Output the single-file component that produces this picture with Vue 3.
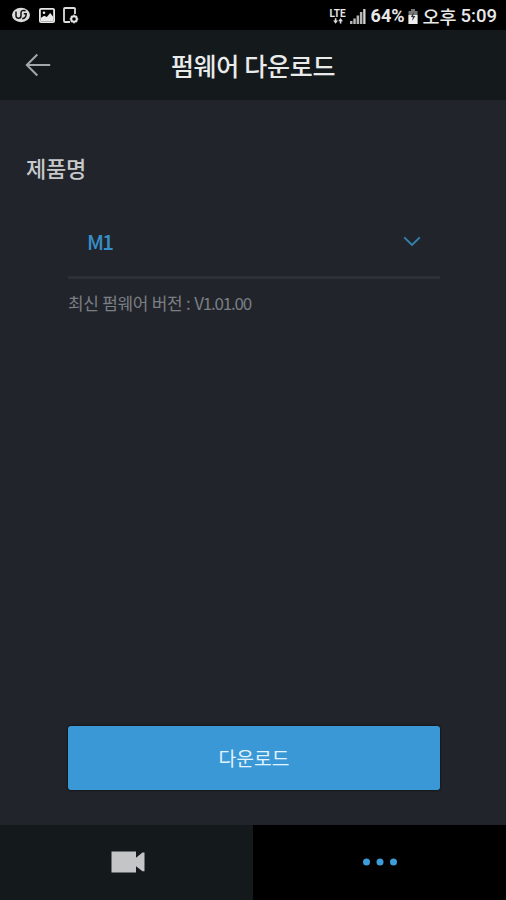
<template>
    <div class="screen">
        <div class="status-bar">
            <div class="status-left">
                <svg width="20" height="16" viewBox="0 0 20 16">
                    <ellipse cx="10" cy="8" rx="9" ry="7.2" fill="#dcdcdc" />
                    <path d="M5 4.5v4.2c0 3.4 5 3.2 5 0V5.5c0-2 2-2.4 4.6-1.8M12.8 6.8h2.4c0 3-1.3 4.6-4 5" fill="none" stroke="#111" stroke-width="1.5" />
                </svg>
                <svg class="icon-image" width="16" height="15" viewBox="0 0 16 15">
                    <rect x="0.9" y="0.9" width="14.2" height="13.2" rx="1.2" fill="none" stroke="#e8e8e8" stroke-width="1.8" />
                    <path d="M2 13V9.8l3.2-2 2.6 1.2 3.4-4L14 8.5V13z" fill="#e8e8e8" />
                    <circle cx="5" cy="4.7" r="1.3" fill="#e8e8e8" />
                </svg>
                <svg class="icon-device" width="16" height="17" viewBox="0 0 16 17">
                    <path d="M12 7V1.9Q12 1 11 1H2Q1 1 1 2v12q0 1 1 1h5" fill="none" stroke="#dedede" stroke-width="1.8" />
                    <circle cx="11" cy="12" r="2.8" fill="none" stroke="#e4e4e4" stroke-width="2" />
                    <path d="M11 7.6v2M11 14.4v2M6.6 12h2M13.4 12h2M7.9 8.9l1.3 1.3M14.1 8.9l-1.3 1.3M7.9 15.1l1.3-1.3M14.1 15.1l-1.3-1.3" stroke="#e4e4e4" stroke-width="1.2" />
                </svg>
            </div>
            <div class="status-right">
                <div class="network">
                    <span class="lte">LTE</span>
                    <svg width="10" height="6" viewBox="0 0 10 6">
                        <path d="M0.2 2.6h1.6V0.2h1.6v2.4H5L2.6 5.8zM5.2 3.2L7.6 0 10 3.2H8.4v2.4H6.8V3.2z" fill="#ddd" />
                    </svg>
                </div>
                <svg class="signal" width="16" height="16" viewBox="0 0 16 16">
                    <path d="M0 13h2.5v3H0zM3.3 10.4h2.5V16H3.3zM6.6 7.4h2.5V16H6.6zM9.9 4h2.5v12H9.9z" fill="#b5b5b5" />
                    <path d="M13.2 1h2.3v15h-2.3z" fill="#d2d2d2" />
                </svg>
                <span class="percent">{{ battery }}%</span>
                <svg class="battery" width="10" height="15" viewBox="0 0 10 15">
                    <path d="M3 0h4v2h2.5v13h-9V2H3z" fill="#777" />
                    <path d="M0.5 6h9v9h-9z" fill="#eee" />
                    <path d="M5.8 3L2.8 8h2l-.7 4L7.4 7H5.2z" fill="#333" />
                </svg>
                <span class="meridiem">오후</span>
                <span class="clock">5:09</span>
            </div>
        </div>

        <header class="header">
            <button class="back-button">
                <svg width="26" height="24" viewBox="0 0 26 24">
                    <path d="M12.3 1.5L1.8 12l10.5 10.5M1.8 12h23.4" fill="none" stroke="#a3a7a9" stroke-width="2" />
                </svg>
            </button>
            <h1 class="title">펌웨어 다운로드</h1>
        </header>

        <main class="content">
            <h2 class="label">제품명</h2>
            <div class="select" @click="NextProduct">
                <span class="product">{{ product.name }}</span>
                <svg width="18" height="11" viewBox="0 0 18 11">
                    <path d="M1.2 1.4L9 9l7.8-7.6" fill="none" stroke="#3583ae" stroke-width="1.8" />
                </svg>
            </div>
            <p class="version">최신 펌웨어 버전 : <span class="number">{{ product.version }}</span></p>
            <button class="download-button"><span>다운로드</span></button>
        </main>

        <nav class="tab-bar">
            <div class="tab" :class="{ active: activeTab === 'camera' }" @click="activeTab = 'camera'">
                <svg class="icon-camera" width="34" height="22" viewBox="0 0 34 22">
                    <path d="M0.5 0.5H25v6.2l6.5-5.2h2v18.8h-2L25 15.3v6.2H0.5z" fill="#c3c5c6" />
                </svg>
            </div>
            <div class="tab" :class="{ active: activeTab === 'more' }" @click="activeTab = 'more'">
                <svg width="36" height="8" viewBox="0 0 36 8">
                    <circle v-for="x in [4.5, 18, 31.5]" :key="x" :cx="x" cy="4" r="3.5" fill="#3d9cda" />
                </svg>
            </div>
        </nav>
    </div>
</template>

<script setup>
    //import
    import { ref, computed } from 'vue';

    //var
    const battery = ref(64);
    const activeTab = ref('more');
    const products = [{ name: 'M1', version: 'V1.01.00' }];
    const selected = ref(0);
    const product = computed(() => products[selected.value]);

    //func
    function NextProduct() {
        selected.value = (selected.value + 1) % products.length;
    }
</script>

<style>
body {
    margin: 0;
    background-color: #21252b;
}
</style>

<style scoped>
.screen {
    display: flex;
    flex-direction: column;
    width: 506px;
    height: 900px;
    overflow: hidden;
    background-color: #21252b;
    font-family: "Noto Sans CJK KR", "Noto Sans", sans-serif;
    white-space: nowrap;
}

.screen svg {
    display: block;
    flex-shrink: 0;
}

.status-bar {
    display: flex;
    justify-content: space-between;
    flex-shrink: 0;
    height: 30px;
    background-color: #000;
    color: #e8e8e8;
}

.status-left {
    display: flex;
    align-items: center;
    padding-left: 11px;
}

.icon-image {
    margin-left: 8px;
}

.icon-device {
    margin-left: 8px;
}

.status-right {
    display: flex;
    align-items: center;
    padding-right: 9px;
    padding-top: 2px;
    line-height: 28px;
}

.network {
    display: flex;
    flex-direction: column;
    align-items: center;
    margin-right: 4px;
}

.lte {
    font-family: Roboto, sans-serif;
    font-size: 10px;
    font-weight: 700;
    line-height: 9px;
}

.signal {
    margin-right: 5px;
}

.percent {
    width: 37px;
    font-family: Roboto, sans-serif;
    font-size: 18px;
    font-weight: 700;
}

.battery {
    margin-right: 5px;
}

.meridiem {
    width: 38px;
    font-size: 18.5px;
    font-weight: 500;
}

.clock {
    font-family: Roboto, sans-serif;
    font-size: 18.5px;
    font-weight: 500;
}

.header {
    display: grid;
    grid-template-columns: 80px 1fr 80px;
    align-items: center;
    flex-shrink: 0;
    height: 70px;
    background-color: #14191c;
}

.back-button {
    padding: 0 0 0 25px;
    border: none;
    background: none;
    cursor: pointer;
}

.title {
    margin: 0;
    color: #e9eaea;
    font-size: 25px;
    font-weight: 500;
    line-height: 36px;
    letter-spacing: -0.3px;
    text-align: center;
}

.content {
    display: flex;
    flex-direction: column;
    flex: 1;
    padding: 0 66px 35px 68px;
}

.label {
    margin: 51px 0 0 -42px;
    color: #c7c8ca;
    font-size: 22px;
    font-weight: 500;
    line-height: 32px;
    letter-spacing: -0.2px;
}

.select {
    display: flex;
    align-items: center;
    justify-content: space-between;
    height: 70px;
    margin-top: 23px;
    padding: 0 19px;
    border-bottom: 3px solid #2d3037;
    cursor: pointer;
}

.product {
    color: #378fc9;
    font-size: 20.5px;
    font-weight: 500;
    letter-spacing: -1.8px;
}

.version {
    margin: 11px 0 0;
    color: #7b7e83;
    font-size: 17px;
    line-height: 26px;
    letter-spacing: -0.4px;
    word-spacing: 0.4px;
}

.number {
    letter-spacing: -1.2px;
}

.download-button {
    height: 64px;
    margin-top: auto;
    padding: 0;
    border: none;
    border-radius: 3px;
    background-color: #3a98d6;
    box-shadow: 0 0 2px 1px #15191c;
    color: #e1f3fc;
    font-family: inherit;
    font-size: 19.3px;
    line-height: 28px;
    cursor: pointer;
}

.tab-bar {
    display: flex;
    flex-shrink: 0;
    height: 75px;
}

.tab {
    display: flex;
    align-items: center;
    justify-content: center;
    flex: 1;
    box-sizing: border-box;
    padding-bottom: 1px;
    background-color: #14191c;
    cursor: pointer;
}

.tab.active {
    background-color: #000;
}

.icon-camera {
    margin-left: 2px;
}
</style>
